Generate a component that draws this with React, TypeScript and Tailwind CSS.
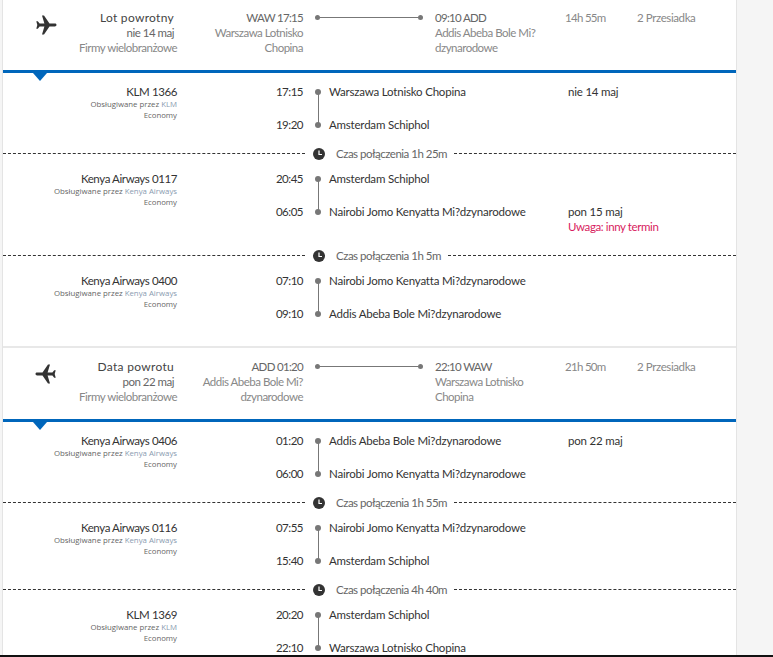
const FONT = "font-['Lato','Open_Sans',sans-serif]";

type Leg = {
  flight: string;
  carrier: string;
  depTime: string;
  depName: string;
  arrTime: string;
  arrName: string;
  depDate?: string;
  arrDate?: string;
  warning?: string;
};

type Trip = {
  title: string;
  date: string;
  depCode: string;
  depName: string[];
  arrCode: string;
  arrName: string[];
  duration: string;
  inbound: boolean;
  legs: Leg[];
  waits: string[];
};

const trips: Trip[] = [
  {
    title: "Lot powrotny",
    date: "nie 14 maj",
    depCode: "WAW 17:15",
    depName: ["Warszawa Lotnisko", "Chopina"],
    arrCode: "09:10 ADD",
    arrName: ["Addis Abeba Bole Mi?", "dzynarodowe"],
    duration: "14h 55m",
    inbound: false,
    waits: ["1h 25m", "1h 5m"],
    legs: [
      { flight: "KLM 1366", carrier: "KLM", depTime: "17:15", depName: "Warszawa Lotnisko Chopina", arrTime: "19:20", arrName: "Amsterdam Schiphol", depDate: "nie 14 maj" },
      { flight: "Kenya Airways 0117", carrier: "Kenya Airways", depTime: "20:45", depName: "Amsterdam Schiphol", arrTime: "06:05", arrName: "Nairobi Jomo Kenyatta Mi?dzynarodowe", arrDate: "pon 15 maj", warning: "Uwaga: inny termin" },
      { flight: "Kenya Airways 0400", carrier: "Kenya Airways", depTime: "07:10", depName: "Nairobi Jomo Kenyatta Mi?dzynarodowe", arrTime: "09:10", arrName: "Addis Abeba Bole Mi?dzynarodowe" },
    ],
  },
  {
    title: "Data powrotu",
    date: "pon 22 maj",
    depCode: "ADD 01:20",
    depName: ["Addis Abeba Bole Mi?", "dzynarodowe"],
    arrCode: "22:10 WAW",
    arrName: ["Warszawa Lotnisko", "Chopina"],
    duration: "21h 50m",
    inbound: true,
    waits: ["1h 55m", "4h 40m"],
    legs: [
      { flight: "Kenya Airways 0406", carrier: "Kenya Airways", depTime: "01:20", depName: "Addis Abeba Bole Mi?dzynarodowe", arrTime: "06:00", arrName: "Nairobi Jomo Kenyatta Mi?dzynarodowe", depDate: "pon 22 maj" },
      { flight: "Kenya Airways 0116", carrier: "Kenya Airways", depTime: "07:55", depName: "Nairobi Jomo Kenyatta Mi?dzynarodowe", arrTime: "15:40", arrName: "Amsterdam Schiphol" },
      { flight: "KLM 1369", carrier: "KLM", depTime: "20:20", depName: "Amsterdam Schiphol", arrTime: "22:10", arrName: "Warszawa Lotnisko Chopina" },
    ],
  },
];

function Plane({ inbound }: { inbound: boolean }) {
  return (
    <svg viewBox="0 0 24 24" className={`h-[24px] w-[24px] fill-[#333333] ${inbound ? "-scale-x-100" : ""}`}>
      <path d="M22.5 12c0-.9-.8-1.4-1.6-1.4h-5.4L10 2.5H8l2.4 8.1H5.6L3.8 8.2H2.3l1 3.8-1 3.8h1.5l1.8-2.4h4.8L8 21.5h2l5.5-8.1h5.4c.8 0 1.6-.5 1.6-1.4z" />
    </svg>
  );
}

function Clock() {
  return (
    <svg viewBox="0 0 12 12" className="h-[12px] w-[12px]">
      <circle cx="6" cy="6" r="6" fill="#333333" />
      <path d="M6 2.5V6.5H9" fill="none" stroke="#ffffff" strokeWidth="1.2" />
    </svg>
  );
}

function TripHeader({ trip }: { trip: Trip }) {
  return (
    <div className="flex h-[71px] pl-[31px] pt-[11px] text-[11.5px] leading-[15px] tracking-[-0.5px] text-[#888888]">
      <div className="w-[24px] shrink-0 pt-[3px]">
        <Plane inbound={trip.inbound} />
      </div>
      <div className="w-[119px] shrink-0 text-right">
        <div className="pr-[3px] text-[12px] tracking-[0.3px] text-[#444444]">{trip.title}</div>
        <div className="pr-[3px] text-[#666666]">{trip.date}</div>
        <div className="whitespace-nowrap">Firmy wielobranżowe</div>
      </div>
      <div className="w-[126px] shrink-0 text-right">
        <div className="tracking-[-0.7px] text-[#666666]">{trip.depCode}</div>
        {trip.depName.map((line) => (
          <div key={line}>{line}</div>
        ))}
      </div>
      <div className="ml-[12px] mt-[5px] flex h-[5px] w-[108px] shrink-0 items-center">
        <span className="h-[5px] w-[5px] rounded-full bg-[#777777]" />
        <span className="h-px flex-1 bg-[#777777]" />
        <span className="h-[5px] w-[5px] rounded-full bg-[#777777]" />
      </div>
      <div className="ml-[12px] w-[130px] shrink-0">
        <div className="tracking-[-0.7px] text-[#666666]">{trip.arrCode}</div>
        {trip.arrName.map((line) => (
          <div key={line}>{line}</div>
        ))}
      </div>
      <div className="w-[72px] shrink-0 tracking-[-0.7px]">{trip.duration}</div>
      <div className="tracking-[-0.4px]">2 Przesiadka</div>
    </div>
  );
}

function LegRow({ leg }: { leg: Leg }) {
  return (
    <div className="flex pb-[13px] pt-[11px] text-[11.5px] leading-[15px] tracking-[-0.2px] text-[#333333]">
      <div className="w-[174px] shrink-0 text-right">
        <div className="tracking-[-0.4px]">{leg.flight}</div>
        <div className="font-['Open_Sans'] text-[7.8px] leading-[11px] tracking-normal text-[#666666]">
          Obsługiwane przez <span className="text-[#8a9bb0]">{leg.carrier}</span>
        </div>
        <div className="font-['Open_Sans'] text-[7.8px] leading-[11px] tracking-normal text-[#666666]">Economy</div>
      </div>
      <div className="relative ml-[126px] flex-1">
        <span className="absolute left-[14.5px] top-[7px] h-[33px] w-px bg-[#777777]" />
        <Stop time={leg.depTime} name={leg.depName} date={leg.depDate} />
        <div className="h-[18px]" />
        <Stop time={leg.arrTime} name={leg.arrName} date={leg.arrDate} warning={leg.warning} />
      </div>
    </div>
  );
}

function Stop({ time, name, date, warning }: { time: string; name: string; date?: string; warning?: string }) {
  return (
    <div className="relative flex min-h-[15px]">
      <span className="absolute left-[-126px] w-[126px] text-right tracking-[-0.5px]">{time}</span>
      <span className="absolute left-[12px] top-[4.5px] h-[6px] w-[6px] rounded-full bg-[#777777]" />
      <span className="ml-[26px] w-[239px] shrink-0">{name}</span>
      <div>
        {date}
        {warning && <div className="tracking-[-0.4px] text-[#d81b60]">{warning}</div>}
      </div>
    </div>
  );
}

function Layover({ wait }: { wait: string }) {
  return (
    <div className="-mb-[2px] flex h-[17px] items-center text-[11.5px] tracking-[-0.5px] text-[#666666]">
      <span className="w-[302px] border-t border-dashed border-[#333333]" />
      <span className="ml-[8px]">
        <Clock />
      </span>
      <span className="ml-[11px] mr-[7px] whitespace-nowrap">Czas połączenia {wait}</span>
      <span className="flex-1 border-t border-dashed border-[#333333]" />
    </div>
  );
}

function TripCard({ trip }: { trip: Trip }) {
  return (
    <section className="border-b-[2px] border-[#e8e8e8] bg-white pb-[12px]">
      <TripHeader trip={trip} />
      <div className="relative h-[3px] bg-[#0066bb]">
        <span className="absolute left-[30px] top-[3px] h-0 w-0 border-x-[7px] border-t-[8px] border-x-transparent border-t-[#0066bb]" />
      </div>
      {trip.legs.map((leg, i) => (
        <div key={leg.flight}>
          <LegRow leg={leg} />
          {i < trip.waits.length && <Layover wait={trip.waits[i]} />}
        </div>
      ))}
    </section>
  );
}

export default function App() {
  return (
    <div className={`relative h-[657px] w-[773px] overflow-hidden bg-[#f5f5f5] ${FONT}`}>
      <div className="-mt-px ml-[2px] w-[735px] border-x border-[#e4e4e4] bg-white">
        {trips.map((trip) => (
          <TripCard key={trip.title} trip={trip} />
        ))}
      </div>
      <div className="absolute bottom-0 left-0 h-[2px] w-full bg-[#111111]" />
    </div>
  );
}
